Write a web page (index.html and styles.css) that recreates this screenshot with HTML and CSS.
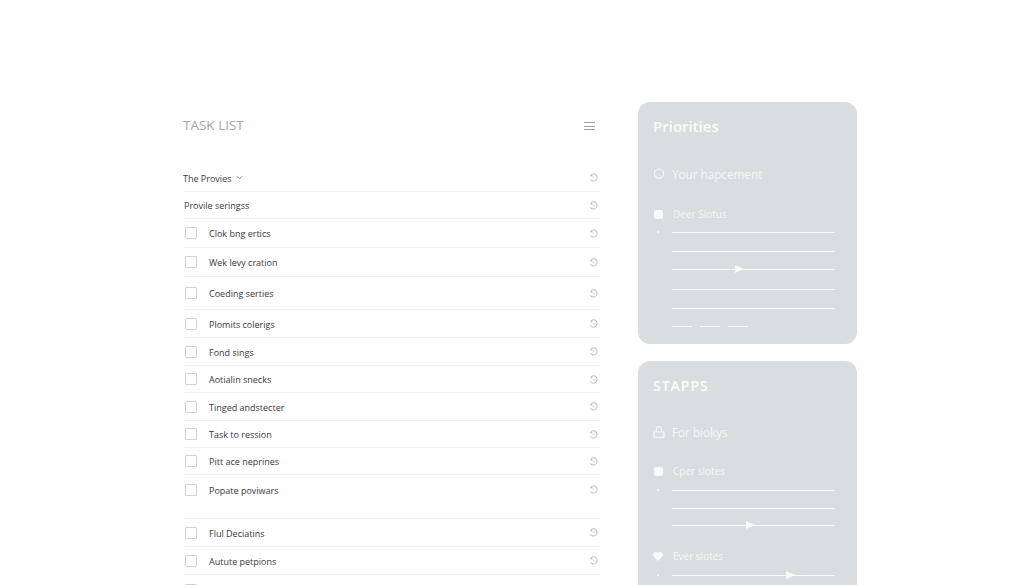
FILE: index.html
```html
<!DOCTYPE html>
<html>
<head>
    <link rel="stylesheet" href="styles.css">
</head>
<body>
    <svg class="defs" width="0" height="0">
        <symbol id="row-icon" viewBox="0 0 10 10">
            <path d="M2.6 1.6A4 4 0 1 1 1.6 7" fill="none" stroke="currentColor" stroke-width="1.2"/>
            <path d="M.6 3.2 3.4 1l.4 3z" fill="currentColor"/>
            <circle cx="5.2" cy="5" r="1.4" fill="currentColor" opacity="0.35"/>
        </symbol>
    </svg>

    <div class="container">
        <div class="tasks">
            <div class="tasks-header">
                <h1>Task List</h1>
                <div class="menu-icon"><span></span><span></span><span></span></div>
            </div>

            <div class="row h28 first">
                <span class="plain">The Provies</span>
                <svg class="chevron" viewBox="0 0 8 6"><path d="M1 1.5 4 4.5 7 1.5" fill="none" stroke="currentColor"/></svg>
                <svg class="row-icon"><use href="#row-icon"/></svg>
            </div>
            <div class="row h27">
                <span class="plain nudge">Provile seringss</span>
                <svg class="row-icon"><use href="#row-icon"/></svg>
            </div>
            <div class="row h29"><span class="check"></span><span class="label">Clok bng ertics</span><svg class="row-icon"><use href="#row-icon"/></svg></div>
            <div class="row h29"><span class="check"></span><span class="label">Wek levy cration</span><svg class="row-icon"><use href="#row-icon"/></svg></div>
            <div class="row h33"><span class="check"></span><span class="label">Coeding serties</span><svg class="row-icon"><use href="#row-icon"/></svg></div>
            <div class="row h28"><span class="check"></span><span class="label">Plomits colerigs</span><svg class="row-icon"><use href="#row-icon"/></svg></div>
            <div class="row h28"><span class="check"></span><span class="label">Fond sings</span><svg class="row-icon"><use href="#row-icon"/></svg></div>
            <div class="row h27"><span class="check"></span><span class="label">Aotialin snecks</span><svg class="row-icon"><use href="#row-icon"/></svg></div>
            <div class="row h28"><span class="check"></span><span class="label">Tinged andstecter</span><svg class="row-icon"><use href="#row-icon"/></svg></div>
            <div class="row h27"><span class="check"></span><span class="label">Task to ression</span><svg class="row-icon"><use href="#row-icon"/></svg></div>
            <div class="row h27"><span class="check"></span><span class="label">Pitt ace neprines</span><svg class="row-icon"><use href="#row-icon"/></svg></div>
            <div class="row h44 top"><span class="check"></span><span class="label">Popate poviwars</span><svg class="row-icon"><use href="#row-icon"/></svg></div>
            <div class="row h28"><span class="check"></span><span class="label">Flul Deciatins</span><svg class="row-icon"><use href="#row-icon"/></svg></div>
            <div class="row h28"><span class="check"></span><span class="label">Autute petpions</span><svg class="row-icon"><use href="#row-icon"/></svg></div>
            <div class="row h10 top"><span class="check"></span></div>
        </div>

        <div class="side">
            <div class="panel priorities">
                <h2>Priorities</h2>
                <div class="panel-row">
                    <svg class="panel-icon" viewBox="0 0 12 12"><circle cx="6" cy="5.6" r="4.6" fill="none" stroke="currentColor" stroke-width="1.2"/></svg>
                    <span>Your hapcement</span>
                </div>
                <div class="group-title"><span class="bullet"></span><span>Deer Slotus</span></div>
                <div class="lines">
                    <div class="line first-line"><i class="dot"></i></div>
                    <div class="line"></div>
                    <div class="line"><b class="knob k40"></b></div>
                    <div class="line gap-wide"></div>
                    <div class="line gap-wide"></div>
                    <div class="dashes"><span></span><span></span><span></span></div>
                </div>
            </div>

            <div class="panel stapps">
                <h2 class="caps">STAPPS</h2>
                <div class="panel-row">
                    <svg class="panel-icon" viewBox="0 0 12 12"><path d="M3.5 6V3a2.5 2.5 0 0 1 5 0v3M1 6h10v5.4H1z" fill="none" stroke="currentColor" stroke-width="1.1"/></svg>
                    <span>For biokys</span>
                </div>
                <div class="group-title"><span class="bullet"></span><span>Cper slotes</span></div>
                <div class="lines">
                    <div class="line first-line"><i class="dot"></i></div>
                    <div class="line"></div>
                    <div class="line"><b class="knob k48"></b></div>
                </div>
                <div class="group-title second">
                    <svg class="heart" viewBox="0 0 10 9"><path d="M5 9 .6 4.4C-.8 2.4.8 0 2.8 0 3.8 0 4.6.5 5 1.2 5.4.5 6.2 0 7.2 0c2 0 3.6 2.4 2.2 4.4z" fill="currentColor"/></svg>
                    <span>Ever slotes</span>
                </div>
                <div class="lines">
                    <div class="line first-line"><i class="dot"></i><b class="knob k72"></b></div>
                </div>
            </div>
        </div>
    </div>
</body>
</html>
```

FILE: styles.css
```css
html, body {
    height: 585px;
    overflow: hidden;
}

body {
    margin: 0;
    background-color: #fff;
    font-family: "Open Sans", "Noto Sans", sans-serif;
}

.defs {
    display: none;
}

.container {
    display: flex;
    align-items: flex-start;
    gap: 37px;
    height: 483px;
    padding: 102px 0 0 183px;
    overflow: hidden;
}

/* task list */
.tasks {
    width: 418px;
    flex-shrink: 0;
}

.tasks-header {
    display: flex;
    justify-content: space-between;
    align-items: center;
    height: 48px;
    margin-bottom: 14px;
}

.tasks-header h1 {
    margin: -2px 0 0;
    font-size: 13.5px;
    font-weight: 400;
    text-transform: uppercase;
    color: #a0a8ad;
}

.menu-icon {
    display: flex;
    flex-direction: column;
    gap: 2.5px;
    margin-right: 6px;
}

.menu-icon span {
    display: block;
    width: 11px;
    height: 1px;
    background-color: #9a9fa2;
}

.row {
    display: flex;
    align-items: center;
    box-sizing: border-box;
    border-bottom: 1px solid #eef0f1;
    font-size: 9px;
    color: #35393c;
}

.h10 { height: 10px; border-bottom: 0; }
.h27 { height: 27px; }
.h28 { height: 28px; }
.h29 { height: 29px; }
.h33 { height: 33px; }
.h44 { height: 44px; }

.row.top {
    align-items: flex-start;
    padding-top: 9px;
}

.row.top .row-icon {
    margin-top: 1px;
}

.label,
.plain {
    padding-top: 1px;
}

.row.top .label {
    padding-top: 0;
}

.nudge {
    margin-left: 1px;
}

.chevron {
    width: 7px;
    height: 5px;
    margin-left: 4px;
    color: #666;
}

.check {
    box-sizing: border-box;
    width: 12px;
    height: 12px;
    margin: 0 12px 0 2px;
    border: 1px solid #cfd2d4;
    border-radius: 1px;
    flex-shrink: 0;
}

.row-icon {
    width: 9px;
    height: 9px;
    margin-left: auto;
    margin-right: 3px;
    color: #bcc0c2;
    flex-shrink: 0;
}

/* side panels */
.side {
    display: flex;
    flex-direction: column;
    gap: 17px;
    width: 219px;
    flex-shrink: 0;
}

.panel {
    box-sizing: border-box;
    padding: 14px 22px 0 15px;
    border-radius: 12px;
    background-color: #dadddf;
    color: #f6f7f8;
}

.priorities {
    height: 242px;
}

.stapps {
    height: 300px;
}

.panel h2 {
    margin: 0;
    font-size: 15px;
    line-height: 21px;
    font-weight: 600;
    color: #fafbfb;
}

.panel h2.caps {
    letter-spacing: 1px;
    font-size: 14px;
}

.panel-row {
    display: flex;
    align-items: center;
    gap: 7px;
    margin-top: 27px;
    font-size: 11.7px;
    line-height: 20px;
}

.stapps .panel-row {
    margin-top: 26px;
}

.panel-icon {
    width: 12px;
    height: 12px;
}

.group-title {
    display: flex;
    align-items: center;
    gap: 10px;
    margin-top: 23px;
    font-size: 10px;
    line-height: 14px;
}

.stapps .group-title {
    margin-top: 22px;
}

.stapps .group-title.second {
    margin-top: 23px;
}

.bullet {
    width: 9px;
    height: 9px;
    margin-left: 1px;
    border-radius: 2px;
    background-color: #f9fafa;
}

.heart {
    width: 10px;
    height: 9px;
    color: #f9fafa;
}

.lines {
    margin: 11px 0 0 19px;
}

.stapps .lines {
    margin-top: 12px;
}

.line {
    position: relative;
    height: 1px;
    margin-top: 17.5px;
    background-color: #f8f9f9;
}

.stapps .line {
    margin-top: 16.5px;
}

.line.first-line,
.stapps .line.first-line {
    margin-top: 0;
}

.line.gap-wide {
    margin-top: 18.5px;
}

.dot {
    position: absolute;
    left: -15px;
    top: -1px;
    width: 2px;
    height: 2px;
    border-radius: 50%;
    background-color: #f8f9f9;
}

.knob {
    position: absolute;
    top: -4px;
    width: 0;
    height: 0;
    border-style: solid;
    border-width: 4.5px 0 4.5px 9px;
    border-color: transparent transparent transparent #f8f9f9;
}

.k40 { left: 63px; }
.k48 { left: 74px; }
.k72 { left: 114px; }

.dashes {
    display: flex;
    gap: 8px;
    margin-top: 17px;
}

.dashes span {
    width: 20px;
    height: 1px;
    background-color: #f8f9f9;
}
```
